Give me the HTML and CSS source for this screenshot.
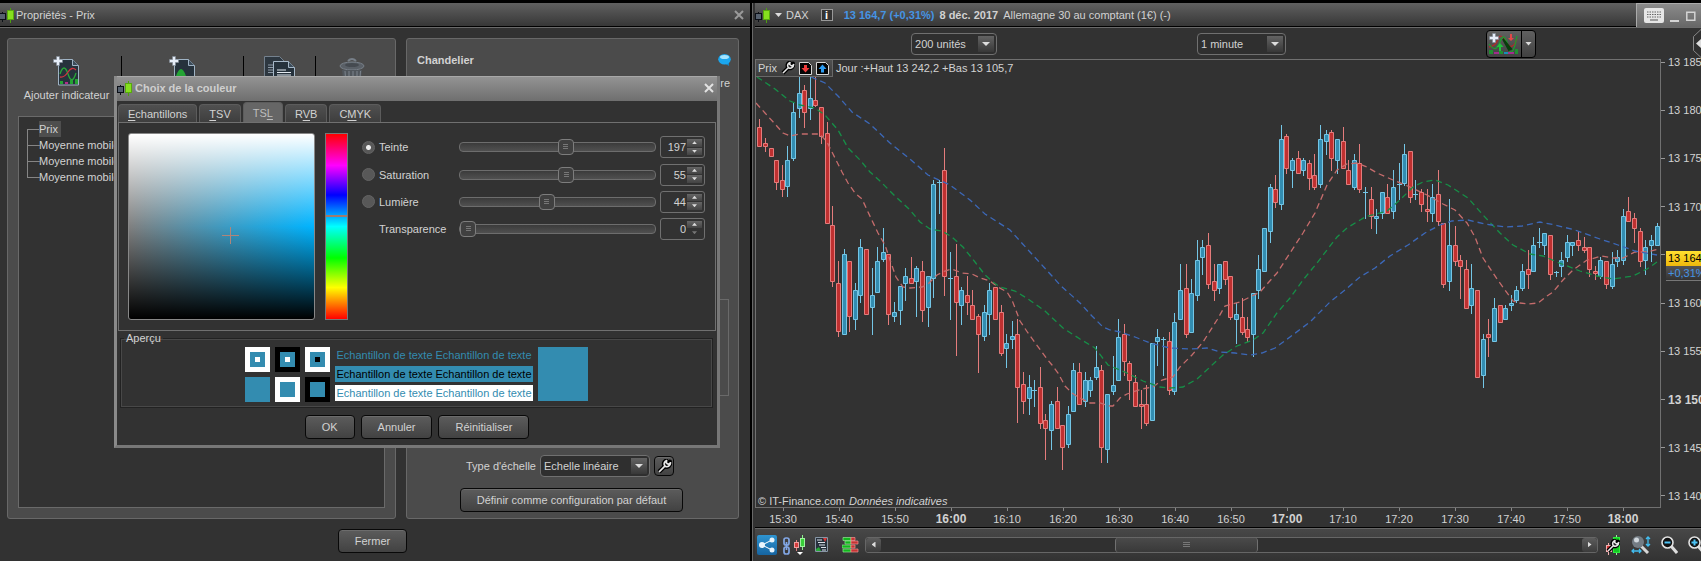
FILE: index.html
```html
<!DOCTYPE html>
<html lang="fr">
<head>
<meta charset="utf-8">
<title>DAX - Propriétés</title>
<link rel="stylesheet" href="styles.css">
</head>
<body>
<svg class="defs" aria-hidden="true">
  <symbol id="candles" viewBox="0 0 15 16">
    <path d="M3.500 5v10" stroke="#0b0f16"/><rect x=".5" y="6.500" width="6" height="6" fill="#56616f" stroke="#0b0f16"/>
    <path d="M11.500 1v15" stroke="#4d9f10"/><rect x="8.500" y="3.500" width="6" height="9" fill="#86e01e" stroke="#57a80f"/>
  </symbol>
  <symbol id="cross" viewBox="0 0 10 10"><path d="M1 1l8 8M9 1l-8 8" fill="none" stroke="currentColor" stroke-width="2"/></symbol>
  <symbol id="wrench" viewBox="0 0 14 14">
    <path d="M2 12l6-6M8.500 1.500c-2 1-2.500 3-1.500 5c1.500 1.500 4 1 5-1.500l0-2.500-2 2-2-1z" fill="#1c1c1c" stroke="#000" stroke-width="4" stroke-linejoin="round"/>
    <path d="M2 12l6-6M9 1.500c-2 .8-3 2.800-2 4.500l1 1c2 .8 4.500-.5 4.700-3.500l-2 1.500-2-1.500z" fill="#222" stroke="#e8e8e8" stroke-width="1.500" stroke-linejoin="round"/>
  </symbol>
  <symbol id="page" viewBox="0 0 26 30">
    <path d="M5.500 3.500h14l6 6v19.500h-20z" fill="#26323c" stroke="#9fb3c4"/><path d="M19.500 3.500v6h6" fill="#3c4c5a" stroke="#9fb3c4"/>
  </symbol>
  <symbol id="plus" viewBox="0 0 10 10"><path d="M3.500 .5h3v3h3v3h-3v3h-3v-3h-3v-3h3z" fill="#e6edf8" stroke="#7c8794" stroke-width=".6"/></symbol>
</svg>

<main class="desk">
  <section class="win props">
    <header class="bar">
      <svg class="mark" width="15" height="16"><use href="#candles"/></svg>
      <h1>Propriétés - Prix</h1>
      <button class="close" aria-label="Fermer la fenêtre"><svg width="10" height="10"><use href="#cross"/></svg></button>
    </header>
    <div class="panels">
      <section class="panel left">
        <div class="tools">
          <button class="tool"><svg width="27" height="31" viewBox="0 0 27 31"><use href="#page" width="26" height="30"/>
            <path d="M7 18q4-12 8 0t8-1" fill="none" stroke="#28a838" stroke-width="1.300"/><path d="M7 21q4 1 8-5t8-2" fill="none" stroke="#cf3440" stroke-width="1.300"/>
            <path d="M7 25h3v3h-3zM17 24h3v4h-3zM22 23h3v5h-3z" fill="#24a434"/><path d="M12 26h3v2h-3z" fill="#b12b8b"/><use href="#plus" width="10" height="10"/></svg><span>Ajouter indicateur</span></button>
          <button class="tool" aria-label="Ajouter un système"><svg width="27" height="31" viewBox="0 0 27 31"><use href="#page" width="26" height="30"/><path d="M7 20q5-14 10 0z" fill="#24a434"/><use href="#plus" width="10" height="10"/></svg></button>
          <button class="tool" aria-label="Dupliquer"><svg width="31" height="31" viewBox="0 0 31 31"><path d="M.5 .5h15l5 5v25h-20z" fill="#2d3740" stroke="#74818e"/><path d="M4 9h5M4 11.500h5M4 14h5M4 16.500h5" stroke="#8c99a6"/><path d="M9.500 5.500h15l6 6v19h-21z" fill="#26323c" stroke="#a6b8c8"/><path d="M24.500 5.500v6h6" fill="#3c4c5a" stroke="#a6b8c8"/><path d="M13 14h9M13 16.500h14M13 19h14" stroke="#e4ebf2"/></svg></button>
          <button class="tool" aria-label="Supprimer"><svg width="26" height="31" viewBox="0 0 26 31"><ellipse cx="13" cy="10" rx="12" ry="4" fill="#5a6067" stroke="#777f88"/><path d="M9 5q4-4 8 0" fill="none" stroke="#777f88" stroke-width="2"/><ellipse cx="13" cy="9" rx="7" ry="2" fill="#454a50"/><path d="M3 14h20l-2 16h-16z" fill="#50565c"/><path d="M6 15l1 14M10 15v14M14 15v14M18 15v14M21.500 15l-1 14" stroke="#7c848d"/></svg></button>
        </div>
        <ul class="tree"><li><b>Prix</b></li><li>Moyenne mobile</li><li>Moyenne mobile</li><li>Moyenne mobile</li></ul>
      </section>
      <section class="panel right">
        <div class="head"><h2>Chandelier</h2><svg width="13" height="12" viewBox="0 0 13 12"><path d="M6 9h5v3z" fill="#1284c4"/><ellipse cx="6.500" cy="5.300" rx="6.300" ry="5.200" fill="#1ba6ee"/><ellipse cx="6.500" cy="3" rx="4.500" ry="2" fill="#a4e4ff"/></svg></div>
        <span class="tail">re</span>
        <div class="group"></div>
        <div class="scale"><label for="scale">Type d'échelle</label>
          <span class="pick"><select id="scale"><option>Echelle linéaire</option></select></span>
          <button class="btn square" aria-label="Régler l'échelle"><svg width="15" height="15"><use href="#wrench"/></svg></button></div>
        <button class="btn wide">Définir comme configuration par défaut</button>
      </section>
    </div>
    <footer class="foot"><button class="btn">Fermer</button></footer>

    <section class="dialog" role="dialog" aria-labelledby="dt">
      <header class="dbar"><svg width="15" height="16"><use href="#candles"/></svg><h2 id="dt">Choix de la couleur</h2><button class="close" aria-label="Fermer le dialogue"><svg width="10" height="10"><use href="#cross"/></svg></button></header>
      <nav class="tabs"><button><u>E</u>chantillons</button><button><u>T</u>SV</button><button class="on">TS<u>L</u></button><button>R<u>V</u>B</button><button>C<u>M</u>YK</button></nav>
      <div class="picker">
        <div class="field"><svg width="17" height="17" viewBox="0 0 17 17"><path d="M8.500 0v17M0 8.500h17" stroke="#b0857a"/></svg></div>
        <div class="hue"><i></i></div>
        <div class="rows">
          <input type="radio" name="c" id="r1" checked><label for="r1">Teinte</label><input type="range" aria-label="Teinte" max="360" value="197"><span class="spin"><input type="text" aria-label="Valeur de teinte" value="197"><span><button aria-label="Plus"></button><button aria-label="Moins"></button></span></span>
          <input type="radio" name="c" id="r2"><label for="r2">Saturation</label><input type="range" aria-label="Saturation" value="55"><span class="spin"><input type="text" aria-label="Valeur de saturation" value="55"><span><button aria-label="Plus"></button><button aria-label="Moins"></button></span></span>
          <input type="radio" name="c" id="r3"><label for="r3">Lumière</label><input type="range" aria-label="Lumière" value="44"><span class="spin"><input type="text" aria-label="Valeur de lumière" value="44"><span><button aria-label="Plus"></button><button aria-label="Moins"></button></span></span>
          <span></span><label for="r4">Transparence</label><input type="range" id="r4" value="0"><span class="spin"><input type="text" aria-label="Valeur de transparence" value="0"><span><button aria-label="Plus"></button><button aria-label="Moins" disabled></button></span></span>
        </div>
      </div>
      <fieldset class="preview"><legend>Aperçu</legend>
        <div class="sw"><i class="w"><b></b></i><i class="k"><b></b></i><i class="w"><b class="dark"></b></i><i></i><i class="w"></i><i class="k"></i></div>
        <div class="samples"><p><span>Echantillon de texte</span><span>Echantillon de texte</span></p><p class="fill"><span>Echantillon de texte</span><span>Echantillon de texte</span></p><p class="paper"><span>Echantillon de texte</span><span>Echantillon de texte</span></p></div>
        <div class="big"></div>
      </fieldset>
      <footer class="actions"><button class="btn">OK</button><button class="btn">Annuler</button><button class="btn">Réinitialiser</button></footer>
    </section>
  </section>

  <section class="win chartwin">
    <header class="bar">
      <svg width="15" height="16"><use href="#candles"/></svg><i class="tri"></i><h1>DAX</h1>
      <button class="info" aria-label="Informations">i</button>
      <strong class="quote">13 164,7 (+0,31%)</strong><strong class="date">8 déc. 2017</strong><span>Allemagne 30 au comptant (1€) (-)</span>
      <div class="controls">
        <button aria-label="Clavier"><svg width="20" height="15" viewBox="0 0 20 15"><rect width="20" height="15" rx="2" fill="#e6e6e6"/><path d="M3 4h14M3 6.500h14M3 9h14" stroke="#666" stroke-dasharray="1.500 1"/><path d="M6 12h8" stroke="#555"/></svg></button>
        <button aria-label="Réduire"><svg width="10" height="12" viewBox="0 0 10 12"><path d="M0 11h9" stroke="#d4d4d4" stroke-width="2"/></svg></button>
        <button aria-label="Agrandir"><svg width="10" height="10" viewBox="0 0 10 10"><path d="M.8 1.200h8v8h-8z" fill="none" stroke="#d4d4d4" stroke-width="1.500"/></svg></button>
        <button aria-label="Fermer le graphique"><svg width="10" height="10"><use href="#cross"/></svg></button>
      </div>
    </header>
    <div class="opts">
      <span class="pick units"><select aria-label="Unités"><option>200 unités</option></select></span>
      <span class="pick time"><select aria-label="Période"><option>1 minute</option></select></span>
      <div class="split"><button aria-label="Ajouter au graphique"><svg width="32" height="24" viewBox="0 0 32 24"><path d="M1 15q7-1 9-8t8 3t11-3" fill="none" stroke="#b02b2b" stroke-width="1.300"/><path d="M1 12q7 10 11-2t8 4t9-10" fill="none" stroke="#1f9c2f" stroke-width="1.300"/><path d="M15 7l8 10-2 1z" fill="#083d0d" stroke="#083d0d" stroke-width="2"/><path d="M11 19v-4h-2.500l3.500-4 3.500 4h-2.500v4z" fill="#1fc33c"/><path d="M22 2v4h-2l3 3 3-3h-2v-4z" fill="#e24848"/><path d="M1 18h4v4h-4zM11 19h4v3h-4zM27 17h3v5h-3z" fill="#1f9030"/><path d="M6 21h5M20 21h6" stroke="#a12d8c" stroke-width="2"/><path d="M16 21h4" stroke="#1690b5" stroke-width="2"/><use href="#plus" x="1" y="1" width="10" height="10"/></svg></button><button aria-label="Autres"><i class="tri"></i></button></div>
      <button class="side" aria-label="Déplier"><svg width="20" height="29" viewBox="0 0 20 29"><path d="M20 .5h-12l-7.500 7v14l7.500 7h12" fill="#303030" stroke="#888"/><path d="M8 10v9l-5-4.500z" fill="#ddd"/></svg></button>
    </div>
    <div class="plot">
      <div class="area">
        <svg id="chart" viewBox="756 60 904 447" preserveAspectRatio="none" role="img" aria-label="Cours du DAX en chandeliers"></svg>
        <div class="series"><span>Prix</span><svg width="14" height="14"><use href="#wrench"/></svg>
          <svg width="13" height="13" viewBox="0 0 13 13"><path d="M.5 .5h9l3 3v9h-12z" fill="#050505" stroke="#d8d8d8"/><path d="M5 3v3h-2.500l4 4.500 4-4.500h-2.500v-3z" fill="#f03c3c"/></svg>
          <svg width="13" height="13" viewBox="0 0 13 13"><path d="M.5 .5h9l3 3v9h-12z" fill="#050505" stroke="#d8d8d8"/><path d="M5 10.500v-3.500h-2.500l4-4.500 4 4.500h-2.500v3.500z" fill="#2c9bf0"/></svg></div>
        <p class="day">Jour :+Haut 13 242,2 +Bas 13 105,7</p>
        <p class="copy"><span>© IT-Finance.com</span><em>Données indicatives</em></p>
      </div>
      <ul class="yaxis"><li>13 185</li><li>13 180</li><li>13 175</li><li>13 170</li><li><b class="last">13 164,7</b><b class="pct">+0,31%</b></li><li>13 160</li><li>13 155</li><li class="strong">13 150</li><li>13 145</li><li>13 140</li></ul>
      <ul class="xaxis"><li>15:30</li><li>15:40</li><li>15:50</li><li class="strong">16:00</li><li>16:10</li><li>16:20</li><li>16:30</li><li>16:40</li><li>16:50</li><li class="strong">17:00</li><li>17:10</li><li>17:20</li><li>17:30</li><li>17:40</li><li>17:50</li><li class="strong">18:00</li></ul>
    </div>
    <footer class="status">
      <button class="share" aria-label="Partager"><svg width="20" height="20" viewBox="0 0 20 20"><path d="M15 5L5 10l10 5" fill="none" stroke="#fff"/><g fill="#e8f4fc"><circle cx="15" cy="5" r="2.500"/><circle cx="5" cy="10" r="3"/><circle cx="15" cy="15" r="2.500"/></g></svg></button>
      <button aria-label="Lier"><svg width="22" height="20" viewBox="0 0 22 20"><g fill="none" stroke="#82a7e6" stroke-width="1.700"><rect x="1" y="3" width="5" height="7" rx="2"/><rect x="1" y="12" width="5" height="7" rx="2"/><path d="M3.500 7v8"/></g><path d="M13.500 5v11" stroke="#e08080"/><rect x="11.500" y="7.500" width="4" height="5" fill="#d43c3c" stroke="#f0a0a0"/><path d="M19.500 0v15" stroke="#8df08d"/><rect x="17.500" y="3.500" width="4" height="8" fill="#38d038" stroke="#a0f0a0"/><path d="M14 17h6l-3 3z" fill="#fff"/></svg></button>
      <button aria-label="Liste"><svg width="13" height="15" viewBox="0 0 13 15"><path d="M.5 .5h12v14h-12z" fill="#27313c" stroke="#8796a5"/><path d="M2 3h5M3 5.500h7M4 8h6M6 10.500h5M7 13h4" stroke="#dbe3ea"/><path d="M8 1h4l-2 4z" fill="#d43a3a"/><path d="M1 14v-2l3-2 2 4z" fill="#28a838"/></svg></button>
      <button class="book" aria-label="Carnet"><svg width="17" height="16" viewBox="0 0 17 16"><g fill="#12b51e" stroke="#90e890" stroke-width=".7"><path d="M1 .5h8v3h-8zM3 4h6v3h-6zM0 8h9v3h-9zM1 12h8v3h-8z"/></g><g fill="#c43434" stroke="#f09090" stroke-width=".7"><path d="M9 .5h4v3h-4zM9 4h7v3h-7zM9 8h4v3h-4zM9 12h7v3h-7z"/></g></svg></button>
      <div class="scroll"><button aria-label="Défiler à gauche"><i class="tri l"></i></button><div class="lane"><div class="thumb"><i></i></div></div><button aria-label="Défiler à droite"><i class="tri r"></i></button></div>
      <button aria-label="Réglages des chandeliers"><svg width="16" height="20" viewBox="0 0 16 20"><path d="M3.500 8v12" stroke="#f0b0b0"/><rect x="1.500" y="10.500" width="5" height="6" fill="#d43434" stroke="#f0b0b0"/><path d="M11.500 0v20" stroke="#9df09d"/><rect x="8.500" y="2.500" width="6" height="15" fill="#14c822" stroke="#2bea3b"/><use href="#wrench" x="1" y="4" width="14" height="14"/></svg></button>
      <button aria-label="Ajuster"><svg width="20" height="18" viewBox="0 0 20 18"><path d="M10 10l7 7" stroke="#d6d6d6" stroke-width="3"/><circle cx="7" cy="6" r="6" fill="#747c84"/><circle cx="5.500" cy="4" r="2.500" fill="#d0d7dc"/><path d="M17 1v9M15 3l2-2 2 2M15 8l2 2 2-2M1 15h9M3 13l-2 2 2 2M8 13l2 2-2 2" fill="none" stroke="#42bdf0" stroke-width="1.300"/></svg></button>
      <button aria-label="Zoom arrière"><svg width="17" height="18" viewBox="0 0 17 18"><path d="M10 10l6 7" stroke="#ddd" stroke-width="3"/><circle cx="6.500" cy="6.500" r="5.500" fill="#111" stroke="#e2e2e2" stroke-width="1.600"/><path d="M3.500 6.500h6" stroke="#4cc3f5" stroke-width="2"/></svg></button>
      <button aria-label="Zoom avant"><svg width="17" height="18" viewBox="0 0 17 18"><path d="M10 10l6 7" stroke="#ddd" stroke-width="3"/><circle cx="6.500" cy="6.500" r="5.500" fill="#111" stroke="#e2e2e2" stroke-width="1.600"/><path d="M3.500 6.500h6M6.500 3.500v6" stroke="#4cc3f5" stroke-width="2"/></svg></button>
    </footer>
  </section>
</main>
<script src="chart.js"></script>
</body>
</html>
```
FILE: styles.css
```css
* { box-sizing: border-box; margin: 0; padding: 0; }
body { background: #000; color: #d2d2d2; font: 11px/14px "Liberation Sans", Arial, sans-serif; }
button, input, select { font: inherit; color: inherit; background: none; border: 0; }
svg { display: block; flex: none; }
ul { list-style: none; }
h1 { font: inherit; }
h2 { font: inherit; font-weight: bold; }
.defs { position: absolute; width: 0; height: 0; }
.desk { display: grid; grid-template-columns: minmax(0, 752fr) minmax(0, 949fr); min-height: 100vh; padding-top: 3px; overflow: hidden; }
.win { display: flex; flex-direction: column; background: #323232; min-width: 0; }
.props { position: relative; border-right: 2px solid #000; }
.bar { display: flex; align-items: center; height: 25px; flex: none; background: linear-gradient(#606060, #353535); border-bottom: 1px solid #6a6a6a; box-shadow: inset 0 -1px #000; }
.mark { margin: 0 2px 0 -1px; }
.close { margin-left: auto; color: #9a9a9a; padding: 2px; }
.props > .bar .close { margin-right: 4px; }

.panels { display: grid; grid-template-columns: minmax(0, 389fr) minmax(0, 333fr); gap: 10px; padding: 10px 11px 10px 7px; flex: 1; }
.panel { display: flex; flex-direction: column; background: #4b4b4b; border: 1px solid #686868; border-radius: 3px; min-width: 0; }
.tools { display: flex; padding: 17px 0 0; height: 77px; }
.tool { display: flex; flex-direction: column; align-items: center; gap: 1px; width: 72px; height: 48px; border-left: 1px solid #000; }
.tool:first-child { width: 113px; padding-left: 4px; border: 0; }
.tool:nth-child(2) { width: 122px; }
.tree { flex: 1; margin: 0 10px; margin-bottom: 10px; padding: 4px 0 0 8px; background: #323232; border: 1px solid #6a6a6a; }
.tree li { position: relative; height: 16px; line-height: 16px; padding-left: 12px; }
.tree li::before { content: ""; position: absolute; left: 0; top: -8px; width: 12px; height: 16px; border: solid #858585; border-width: 0 0 1px 1px; }
.tree li:first-child::before { top: 7px; height: 1px; border-width: 0 0 1px; }
.tree b { display: inline-block; font-weight: normal; background: #4e4e4e; padding-right: 3px; }
.right { align-items: center; padding-bottom: 6px; }
.head { display: flex; align-self: stretch; align-items: center; justify-content: space-between; padding: 14px 7px 0 10px; }
.tail { align-self: flex-end; margin: 9px 8px 0; }
.group { align-self: stretch; height: 97px; margin: auto 9px 59px; border: 1px solid #6a6a6a; }
.scale { display: flex; align-items: center; gap: 4px; margin: 0 5px 11px 0; }
.scale .pick { width: 110px; }
.wide { margin-right: 2px; }
.foot { display: flex; justify-content: center; padding: 0 5px 8px 0; }

.btn { height: 24px; padding: 0 16px; border: 1px solid #080808; border-radius: 4px; background: linear-gradient(#5c5c5c, #424242); box-shadow: inset 0 1px #6c6c6c; }
.square { width: 20px; height: 20px; padding: 2px; }
.pick { position: relative; display: block; height: 22px; border: 1px solid #707070; border-radius: 4px; background: #2f2f2f; }
.pick select { appearance: none; width: 100%; height: 100%; padding-left: 3px; }
.pick::before { content: ""; position: absolute; right: 2px; top: 2px; width: 16px; height: 16px; background: linear-gradient(#636363, #383838); pointer-events: none; }
.pick::after { content: ""; position: absolute; right: 6px; top: 8px; border: solid transparent; border-width: 4px 4px 0; border-top-color: #ddd; pointer-events: none; }
.tri { flex: none; width: 7px; height: 4px; background: #ddd; clip-path: polygon(0 0, 100% 0, 50% 100%); }
.tri.l { width: 4px; height: 6px; clip-path: polygon(100% 0, 100% 100%, 0 50%); }
.tri.r { width: 4px; height: 6px; clip-path: polygon(0 0, 100% 50%, 0 100%); }

.dialog { position: absolute; left: 114px; right: 30px; top: 73px; display: flex; flex-direction: column; background: #323232; border: 3px solid #777; border-left-color: #8a8a8a; border-top: 0; }
.dbar { display: flex; align-items: center; gap: 3px; height: 25px; padding-bottom: 2px; background: linear-gradient(#939393, #6f6f6f); border-top: 1px solid #a8a8a8; color: #cfcfcf; }
.dbar .close { color: #e2e2e2; margin-right: 1px; }
.tabs { display: flex; align-items: flex-end; gap: 2px; height: 21px; padding-left: 1px; }
.tabs button { height: 18px; padding: 0 9px; background: linear-gradient(#505050, #3e3e3e); border: 1px solid #5c5c5c; border-bottom: 0; border-radius: 4px 4px 0 0; }
.tabs .on { height: 20px; background: #666; color: #bdbdbd; }
.tabs u { text-underline-offset: 2px; }
.picker { display: flex; align-items: flex-start; margin: 0 1px; padding: 10px 9px 10px; border: 1px solid #707070; gap: 10px; }
.field { position: relative; width: 187px; height: 187px; border: 1px solid #888; border-radius: 3px; background: linear-gradient(#fff, rgba(255,255,255,0) 50%, rgba(0,0,0,0) 50%, #000), linear-gradient(90deg, #808080, #00b4ff); }
.field svg { position: absolute; left: 55%; top: 55%; transform: translate(-9px, -9px); }
.hue { position: relative; width: 23px; height: 187px; border: 1px solid #777; background: linear-gradient(#f00, #f0f 17%, #00f 33%, #0ff 50%, #0f0 67%, #ff0 83%, #f00); }
.hue i { position: absolute; inset: 44% 0 auto; height: 2px; background: #a07b70; }
.rows { flex: 1; display: grid; grid-template-columns: 13px minmax(0, 76px) minmax(0, 197px) 45px; grid-template-rows: 28px 27px 27px 27px; column-gap: 4px; align-items: center; margin-left: 4px; }
.rows input[type=radio] { appearance: none; width: 13px; height: 13px; border-radius: 50%; background: #585858; border: 1px solid #646464; }
.rows input[type=radio]:checked { background: radial-gradient(circle, #eee 2px, #585858 3px); }
.rows input[type=range] { appearance: none; height: 16px; min-width: 0; }
.rows input::-webkit-slider-runnable-track { height: 10px; border: 1px solid #6d6d6d; border-radius: 4px; background: linear-gradient(#3b3b3b, #505050); }
.rows input::-webkit-slider-thumb { appearance: none; width: 16px; height: 16px; margin-top: -4px; border: 1px solid #7d7d7d; border-radius: 4px; background: linear-gradient(#777, #777) 50% 4px / 5px 1px no-repeat, linear-gradient(#777, #777) 50% 6px / 5px 1px no-repeat, linear-gradient(#777, #777) 50% 8px / 5px 1px no-repeat, #404040; }
.rows label { white-space: nowrap; }
.spin { display: flex; height: 22px; padding: 2px; border: 1px solid #707070; border-radius: 3px; }
.spin input { width: 24px; text-align: right; padding-right: 1px; }
.spin > span { display: flex; flex-direction: column; gap: 1px; }
.spin button { width: 15px; height: 8px; background: linear-gradient(#666, #434343); display: grid; place-items: center; }
.spin button::before { content: ""; width: 5px; height: 3px; background: #ddd; clip-path: polygon(50% 0, 100% 100%, 0 100%); }
.spin button + button::before { clip-path: polygon(0 0, 100% 0, 50% 100%); }
.spin button:disabled { background: none; opacity: .4; }

.preview { display: flex; justify-content: center; gap: 5px; margin: 0 4px 0 3px; padding: 2px 0 5px; border: 1px solid #222; box-shadow: inset 0 0 0 1px #484848; min-width: 0; }
.preview legend { margin-left: 3px; padding: 0 2px; }
.sw { display: grid; grid-template-columns: repeat(3, 25px); grid-template-rows: 25px 25px; gap: 5px; }
.sw i { display: grid; place-items: center; background: #338cb0; }
.sw .w { border: 5px solid #fff; }
.sw .k { border: 5px solid #000; }
.sw b { width: 5px; height: 5px; background: #fff; }
.sw .dark { background: #000; }
.samples { display: flex; flex-direction: column; gap: 3px; color: #338cb0; white-space: nowrap; }
.samples p { display: flex; gap: 3px; height: 16px; line-height: 17px; padding: 0 1px; }
.samples .fill { background: #338cb0; color: #000; }
.samples .paper { background: #fff; }
.big { width: 50px; height: 54px; background: #338cb0; }
.actions { display: flex; justify-content: center; gap: 6px; padding: 7px 0 6px; }

.chartwin { border-left: 1px solid #686868; padding-left: 2px; }
.chartwin .bar { gap: 5px; white-space: nowrap; }
.chartwin .bar > h1 { margin-right: 7px; margin-left: -1px; }
.info { width: 12px; height: 12px; border: 1px solid #999; background: #333; color: #fff; font-weight: bold; line-height: 10px; margin-right: 6px; }
.quote { color: #4594e4; }
.controls { display: flex; align-items: center; gap: 6px; align-self: stretch; margin-left: auto; padding-left: 7px; background: linear-gradient(#8b8b8b, #676767); border: solid #aaa; border-width: 1px 0 0 1px; width: 65px; overflow: hidden; }
.controls button { flex: none; }
.opts { display: flex; align-items: center; height: 31px; overflow: hidden; padding-left: 16.5%; }
.units { width: 86px; margin-right: auto; }
.time { width: 89px; margin-right: auto; }
.split { display: flex; height: 28px; border: 1px solid #000; border-radius: 4px; background: linear-gradient(#606060, #414141); margin-right: 157px; width: 50px; }
.split button { display: grid; place-items: center; width: 34px; }
.split button + button { width: 14px; border-left: 1px solid #000; }
.side { margin-right: -12px; }

.plot { flex: 1; display: grid; grid-template-columns: minmax(0, 1fr) 40px; grid-template-rows: minmax(0, 1fr) 19px; }
.area { position: relative; border: 1px solid #707070; min-height: 200px; }
#chart { position: absolute; inset: 0; width: 100%; height: 100%; }
#chart * { vector-effect: non-scaling-stroke; }
.up { fill: #338db1; stroke: #74c6e6; }
.down { fill: #bf3030; stroke: #e47c7c; }
.ma { fill: none; stroke-width: 1.3; stroke-dasharray: 6 4; }
.series { position: absolute; left: 0; top: 0; display: flex; align-items: center; gap: 4px; height: 17px; padding: 0 3px 0 2px; background: linear-gradient(#505050, #3c3c3c); border: solid #686868; border-width: 0 1px 1px 0; }
.day { position: absolute; left: 80px; top: 1px; }
.copy { position: absolute; left: 2px; bottom: -1px; display: flex; gap: 4px; }
.yaxis { display: flex; flex-direction: column; justify-content: space-between; padding: 3px 0 12px; white-space: nowrap; overflow: visible; }
.yaxis li { position: relative; display: flex; align-items: center; height: 0; gap: 3px; }
.yaxis li::before { content: ""; flex: none; width: 4px; height: 1px; background: #999; }
.strong { font-weight: bold; font-size: 12px; }
.last, .pct { position: absolute; left: 5px; height: 15px; line-height: 15px; padding-left: 2px; width: 60px; font-weight: normal; }
.last { top: -4px; background: linear-gradient(#ffe030, #eeb80c); color: #000; }
.pct { top: 11px; background: linear-gradient(#555, #333); border-bottom: 1px solid #777; color: #4594e4; }
.xaxis { display: flex; padding-right: 10px; }
.xaxis li { flex: 1; display: flex; flex-direction: column; align-items: center; line-height: 16px; }
.xaxis li::before { content: ""; width: 1px; height: 4px; background: #888; }
.status { display: flex; align-items: center; height: 34px; flex: none; padding-left: 2px; gap: 10px; overflow: hidden; border-top: 1px solid #000; box-shadow: inset 0 1px #666; background: linear-gradient(#484848, #323232); }
.status > button { flex: none; }
.status .share { margin-right: -4px; background: linear-gradient(#2e95d2, #1664a0); border-radius: 2px; }
.status .book { margin-left: 4px; }
.scroll { flex: 1; display: flex; height: 16px; border: 1px solid #666; background: #303030; border-radius: 3px; margin: 0 -3px 0 -4px; }
.scroll > button { display: grid; place-items: center; width: 15px; background: linear-gradient(#5c5c5c, #3c3c3c); border-radius: 3px; }
.lane { flex: 1; padding-left: 32%; }
.thumb { display: grid; place-items: center; width: 143px; height: 14px; border: solid #707070; border-width: 0 1px; border-radius: 3px; background: linear-gradient(#4a4a4a, #393939); }
.thumb i { width: 7px; height: 5px; border: solid #777; border-width: 1px 0; background: linear-gradient(#777, #777) 0 1px / 7px 1px no-repeat; }
.status > button:last-child { margin-right: -4px; }
```
FILE: chart.js
```js
// Each candle: high, body top, body bottom, low, direction (u = up, d = down).
const candles = `119,127,147,147,d;138,143,147,152,d;148,148,157,157,d;160,160,183,190,d;165,180,190,197,d;146,160,187,197,u;103,112,159,161,u;77,93,109,118,u;85,90,113,128,d;77,98,109,120,u;77,100,106,107,d;107,107,137,144,d;122,133,224,224,d;206,225,282,287,d;261,283,332,337,d;249,254,335,335,u;261,261,317,332,d;283,290,320,330,u;239,247,296,303,u;249,249,315,315,d;268,295,308,335,u;247,261,293,293,u;228,252,260,262,u;254,254,315,325,d;302,312,317,322,u;286,286,311,325,u;268,276,284,301,u;257,278,284,284,d;266,268,282,317,u;261,271,311,322,d;276,276,308,327,u;180,184,279,298,u;180,182,183,214,u;148,170,277,296,d;252,278,279,320,u;244,276,303,356,d;287,290,306,325,u;276,295,303,315,d;290,305,320,320,d;314,316,335,373,d;305,312,337,341,u;283,290,315,335,u;287,287,320,320,d;305,312,354,356,d;334,343,349,368,u;321,336,340,349,u;319,334,388,423,d;372,384,402,414,d;375,387,399,415,u;380,390,391,407,u;367,387,424,429,d;414,420,429,460,d;401,404,431,450,u;387,401,429,429,d;425,425,448,470,d;406,414,445,448,u;363,370,412,412,u;363,372,405,405,d;372,380,402,407,u;377,380,391,397,u;346,367,378,380,u;365,370,448,463,d;394,394,450,463,u;356,385,392,395,u;319,337,381,381,u;324,334,362,376,d;361,363,381,400,d;375,382,407,407,d;390,404,407,429,d;385,404,424,426,d;343,343,421,421,u;329,337,342,366,u;337,339,340,376,u;332,341,391,395,d;313,322,392,395,u;264,290,320,320,u;264,288,335,338,d;279,293,333,333,u;240,260,296,301,u;240,247,258,275,u;233,245,285,289,d;264,281,291,301,d;264,264,289,294,u;261,261,280,285,d;276,276,318,320,d;303,314,320,344,u;298,317,333,335,d;317,329,338,342,d;293,293,335,357,u;255,269,291,299,u;228,228,272,272,u;184,187,232,243,u;175,189,203,208,d;125,139,205,210,u;134,136,169,174,d;158,160,171,188,u;151,158,174,174,d;158,160,171,176,u;160,163,179,190,d;154,175,188,190,d;125,139,185,188,u;130,134,142,155,u;130,132,159,171,d;139,139,161,174,u;127,141,169,169,d;160,170,185,185,d;154,160,188,190,u;144,163,190,193,d;187,192,193,219,u;187,199,217,229,d;209,216,219,234,u;192,192,214,219,u;184,197,214,214,d;170,187,212,219,u;163,184,185,200,u;144,154,184,186,u;151,151,198,203,d;180,194,195,200,u;189,192,205,212,d;189,209,212,222,d;184,197,214,222,u;170,194,222,226,d;223,223,285,288,d;199,245,282,291,u;226,245,262,266,d;255,260,267,299,d;260,269,309,309,d;264,288,306,314,u;290,290,378,378,d;334,339,376,388,u;319,334,338,357,d;298,308,342,342,u;305,305,323,323,d;305,308,320,320,u;295,303,306,311,u;286,290,301,303,u;264,271,289,291,u;250,269,275,289,d;237,245,272,272,u;228,242,243,248,u;233,233,246,255,u;235,235,275,280,d;271,272,273,277,u;252,260,267,277,u;235,242,258,262,u;242,242,246,256,u;231,240,246,251,d;237,247,251,253,d;247,247,270,277,d;266,271,274,280,d;257,260,277,279,u;261,261,285,289,d;252,264,287,289,u;250,257,262,267,u;209,216,261,265,u;197,211,222,222,d;213,218,229,243,d;228,231,262,267,d;240,247,261,275,u;235,240,246,262,u;223,226,246,246,u`;

const averages = {
  '#c56c6c': '756,103 765,113 775,124 783,133 790,136 800,134 820,134 827,142 835,158 842,172 848,183 855,193 862,199 868,212 878,233 885,245 890,260 896,277 903,287 910,288 922,287 928,284 937,275 945,271 952,269 962,273 972,274 980,278 990,281 998,287 1007,292 1012,300 1020,321 1028,333 1047,359 1052,365 1058,373 1065,386 1072,393 1078,397 1090,403 1100,403 1110,406 1113,406 1120,398 1127,394 1142,389 1153,387 1162,380 1173,377 1180,367 1192,355 1203,342 1217,320 1225,306 1240,302 1252,296 1260,292 1268,283 1277,273 1290,253 1303,233 1315,213 1327,185 1337,170 1347,164 1357,163 1367,167 1377,173 1393,180 1410,187 1427,195 1443,204 1455,210 1467,223 1475,237 1483,258 1497,279 1513,301 1520,303 1528,304 1538,303 1547,296 1553,292 1563,280 1573,270 1587,260 1602,256 1613,258 1623,258 1635,252 1647,252 1659,249',
  '#168f47': '757,77 775,89 790,101 800,105 815,108 825,115 838,130 848,148 860,160 870,172 880,181 895,196 910,210 920,222 930,229 942,231 952,237 963,247 975,262 985,275 993,282 1000,287 1015,291 1028,299 1045,311 1063,328 1080,339 1095,348 1108,365 1127,373 1143,381 1160,387 1170,388 1183,387 1197,379 1210,367 1223,355 1237,346 1253,340 1263,333 1277,313 1290,298 1303,280 1317,263 1337,237 1347,228 1365,217 1387,211 1400,200 1413,187 1423,182 1435,180 1448,185 1468,198 1483,215 1500,233 1513,245 1530,254 1543,256 1557,262 1580,271 1597,276 1613,279 1633,276 1647,269 1657,262',
  '#3c68b8': '811,77 825,83 838,96 852,112 870,124 890,143 910,159 928,175 950,185 970,200 985,214 1010,230 1030,252 1052,276 1060,285 1080,303 1092,316 1103,327 1110,330 1120,332 1135,337 1150,343 1170,348 1190,349 1207,348 1220,352 1235,353 1250,355 1262,353 1275,348 1290,337 1310,322 1330,302 1345,290 1360,277 1375,268 1390,256 1408,245 1425,233 1440,225 1452,221 1468,220 1485,224 1505,227 1522,226 1540,222 1555,225 1575,230 1600,239 1618,245 1635,251 1657,255'
};

const svg = document.getElementById('chart');
let out = '';
candles.split(';').forEach((row, i) => {
  const [high, top, bottom, low, dir] = row.split(',');
  const x = Math.floor(759.9 + i * 5.607) + 0.5;
  const cls = dir === 'u' ? 'up' : 'down';
  out += `<path class="${cls}" d="M${x} ${high}V${low}"/>`;
  out += `<rect class="${cls}" x="${x - 2}" y="${+top + 0.5}" width="4" height="${bottom - top - 1}"/>`;
  if (bottom - top === 1) out += `<path class="${cls}" d="M${x - 2.5} ${+top + 0.5}h5"/>`;
});
for (const [color, points] of Object.entries(averages)) {
  out += `<polyline class="ma" stroke="${color}" points="${points}"/>`;
}
svg.innerHTML = out;
```
